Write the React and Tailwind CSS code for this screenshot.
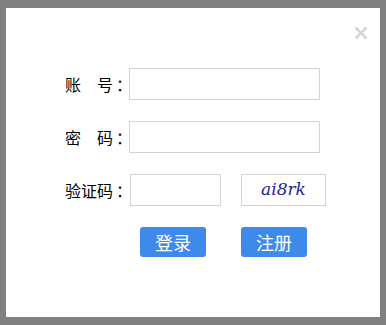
import { useState } from "react";

const labelCls =
  "w-[64px] text-[16px] leading-none text-black whitespace-pre";

const inputCls =
  "h-[32px] border border-[#d3d3d3] bg-white px-2 text-[14px] outline-none focus:border-[#3e8aeb]";

const btnCls =
  "h-[30px] w-[66px] rounded-[3px] bg-[#3e8aeb] text-[18px] leading-none text-white";

const Label = ({ text }) => (
  <span className={labelCls}>
    {text}
    <span className="ml-[3px]">：</span>
  </span>
);

const LoginDialog = () => {
  const [account, setAccount] = useState("");
  const [password, setPassword] = useState("");
  const [code, setCode] = useState("");

  return (
    <div className="relative h-[309px] w-[374px] bg-white">
      {/* close */}
      <div className="flex justify-end pr-[12px] pt-[18px]">
        <button className="h-[14px] w-[14px] text-[#d6d6d6]" aria-label="close">
          <svg viewBox="0 0 14 14" width="14" height="14">
            <path
              d="M1.5 1.5 L12.5 12.5 M12.5 1.5 L1.5 12.5"
              stroke="currentColor"
              strokeWidth="2.6"
            />
          </svg>
        </button>
      </div>

      <form
        className="mt-[28px] flex flex-col gap-[21px] pl-[59px]"
        style={{ fontFamily: '"Noto Sans CJK SC", "Noto Sans", sans-serif' }}
        onSubmit={(e) => e.preventDefault()}
      >
        <div className="flex items-center">
          <Label text="账　号" />
          <input
            className={`${inputCls} w-[191px]`}
            value={account}
            onChange={(e) => setAccount(e.target.value)}
          />
        </div>
        <div className="flex items-center">
          <Label text="密　码" />
          <input
            type="password"
            className={`${inputCls} w-[191px]`}
            value={password}
            onChange={(e) => setPassword(e.target.value)}
          />
        </div>
        <div className="flex items-center">
          <Label text="验证码" />
          <input
            className={`${inputCls} ml-[1px] w-[91px]`}
            value={code}
            onChange={(e) => setCode(e.target.value)}
          />
          <div className="ml-[20px] flex h-[32px] w-[85px] items-center justify-center border border-[#d3d3d3]">
            <span
              className="text-[17px] italic text-[#23239a]"
              style={{ fontFamily: '"DejaVu Serif", serif' }}
            >
              ai8rk
            </span>
          </div>
        </div>
        <div className="flex gap-[35px] pl-[75px]">
          <button className={btnCls}>登录</button>
          <button className={btnCls}>注册</button>
        </div>
      </form>
    </div>
  );
};

export default function App() {
  return (
    <div className="h-[325px] w-[386px] bg-[#808080] px-[6px] pt-[8px]">
      <LoginDialog />
    </div>
  );
}
